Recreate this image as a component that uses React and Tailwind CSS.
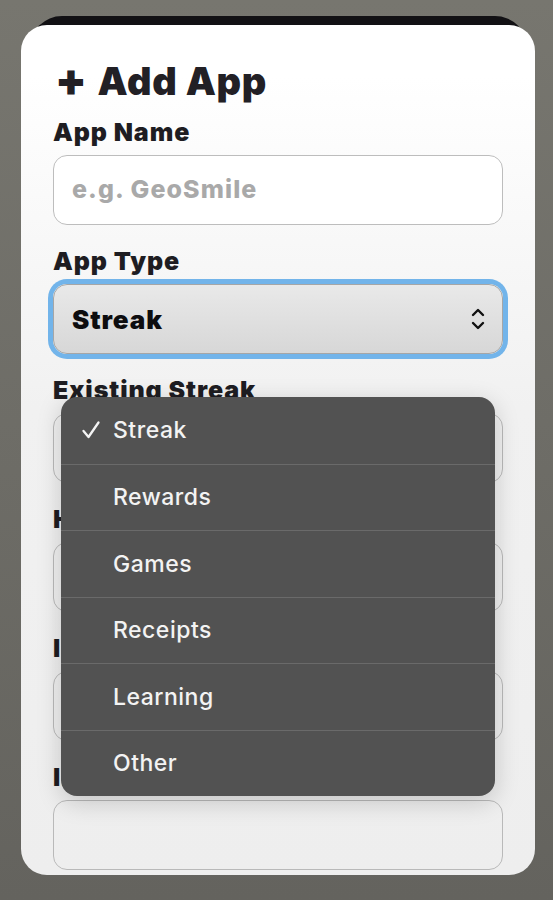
import React from "react";

const font = { fontFamily: "Inter, 'Noto Sans', sans-serif" };

const options = ["Streak", "Rewards", "Games", "Receipts", "Learning", "Other"];

const Field = ({ label, children }) => (
  <div className="flex flex-col mb-[21px]">
    <label className="text-[25px] leading-[30px] font-black text-[#1e1d22] tracking-[0.9px] mb-[8px] whitespace-nowrap">
      {label}
    </label>
    {children}
  </div>
);

const TextBox = () => (
  <div className="h-[70px] rounded-[14px] border-[1.5px] border-[#b9b9b9]" />
);

const ChevronUpDown = () => (
  <svg width="16" height="26" viewBox="0 0 16 26" fill="none" stroke="#111" strokeWidth="2.4" strokeLinecap="round" strokeLinejoin="round">
    <path d="M3 9 L8 4 L13 9" />
    <path d="M3 17 L8 22 L13 17" />
  </svg>
);

const Check = () => (
  <svg width="20" height="20" viewBox="0 0 20 20" fill="none" stroke="#f4f4f4" strokeWidth="2.3" strokeLinecap="round" strokeLinejoin="round">
    <path d="M2.5 11 L7.5 17 L17.5 2.5" />
  </svg>
);

export default function App() {
  return (
    <div
      className="w-full h-[900px] bg-linear-to-b from-[#77766f] to-[#64635e] pt-[16px] pl-[21px] pr-[18px] overflow-hidden"
      style={font}
    >
      {/* sheet behind */}
      <div className="ml-[9px] mr-[8px] h-[40px] rounded-t-[32px] bg-[#121114]" />

      {/* card */}
      <div className="relative -mt-[31px] h-[850px] rounded-[26px] bg-linear-to-b from-white from-[6%] via-[#f1f1f1] via-[45%] to-[#eeeeee] px-[32px] pt-[34px] overflow-hidden">
        <h2 className="flex items-center text-[38px] leading-[44px] font-black text-[#222025] tracking-[0.7px] mb-[14px] ml-[2px]">
          <span className="text-[46px] mr-[10px] -mt-[4px]">+</span>
          Add App
        </h2>

        <Field label="App Name">
          <div className="h-[70px] rounded-[14px] border-[1.5px] border-[#bdbdbd] bg-white flex items-center px-[18px]">
            <span className="text-[25px] font-extrabold tracking-[1.1px] text-[#a9a9a9]">e.g. GeoSmile</span>
          </div>
        </Field>

        <Field label="App Type">
          <div className="h-[70px] rounded-[14px] border-[1.5px] border-[#a6a6a6] ring-[5px] ring-[#72b4ea] bg-linear-to-b from-[#e9e9e9] to-[#d7d7d7] flex items-center justify-between pl-[18px] pr-[16px]">
            <span className="text-[26px] font-black tracking-[0.9px] text-[#0d0d0f]">Streak</span>
            <ChevronUpDown />
          </div>
        </Field>

        <Field label="Existing Streak">
          <TextBox />
        </Field>

        <Field label="Habit Target">
          <TextBox />
        </Field>

        <Field label="Icon">
          <TextBox />
        </Field>

        <Field label="Invite Link">
          <TextBox />
        </Field>

        {/* dropdown menu */}
        <div className="absolute left-[40px] top-[372px] w-[434px] rounded-[16px] bg-[#525252] overflow-hidden shadow-[0_6px_24px_rgba(0,0,0,0.18)]">
          {options.map((o, i) => (
            <div
              key={o}
              className={`h-[66.5px] flex items-center ${i > 0 ? "border-t border-[#6a6a6a]" : ""}`}
            >
              <div className="w-[52px] flex justify-end pr-[12px]">
                {i === 0 && <Check />}
              </div>
              <span className="text-[23px] font-medium tracking-[0.5px] text-[#f3f3f3]">{o}</span>
            </div>
          ))}
        </div>
      </div>
    </div>
  );
}
